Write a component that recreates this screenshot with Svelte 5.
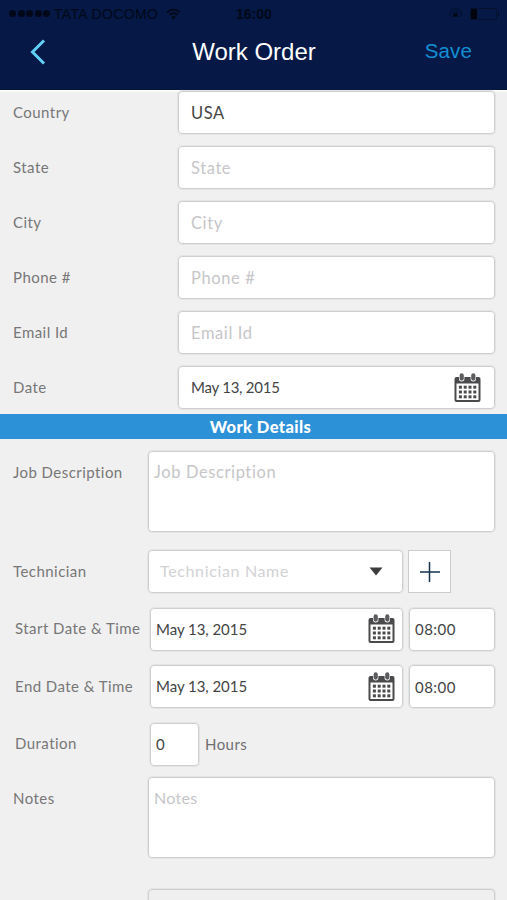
<script lang="ts">
  let contact = $state([
    { label: 'Country', value: 'USA' },
    { label: 'State', value: '' },
    { label: 'City', value: '' },
    { label: 'Phone #', value: '' },
    { label: 'Email Id', value: '' },
  ]);

  let schedule = $state([
    { label: 'Start Date & Time', date: 'May 13, 2015', time: '08:00' },
    { label: 'End Date & Time', date: 'May 13, 2015', time: '08:00' },
  ]);

  let orderDate = $state('May 13, 2015');
  let description = $state('');
  let technician = $state('');
  let duration = $state('0');
  let notes = $state('');
</script>

{#snippet calendar()}
  <svg class="calendar" width="27" height="30" viewBox="0 0 27 30" aria-hidden="true">
    <path d="M2.500 4h22a2 2 0 0 1 2 2v21a2 2 0 0 1-2 2h-22a2 2 0 0 1-2-2V6a2 2 0 0 1 2-2z" fill="#4a4a4c" />
    <rect x="2.500" y="10.500" width="22" height="16.500" fill="#fff" />
    {#each [12.7, 17.500, 22.300] as y}
      {#each [4.900, 9.700, 14.500, 19.300] as x}
        <rect {x} {y} width="3" height="3" fill="#4a4a4c" />
      {/each}
    {/each}
    {#each [7.700, 19.300] as x}
      <rect x={x - 2.700} y="0" width="5.400" height="8.500" rx="2.700" fill="#fff" />
      <rect x={x - 2.100} y="0.300" width="4.200" height="7.400" rx="2.100" fill="#5c5c5e" />
    {/each}
  </svg>
{/snippet}

<div class="screen">
  <header>
    <div class="status">
      <span class="signal">{#each Array(5) as _}<i></i>{/each}</span>
      <span class="carrier">TATA DOCOMO</span>
      <svg class="wifi" width="15" height="12" viewBox="0 0 15 12" fill="none" stroke="#020817" stroke-width="1.800">
        <path d="M1 4.300a9.300 9.300 0 0 1 13 0M3.400 6.900a5.900 5.900 0 0 1 8.200 0" />
        <path d="M5.300 9.200a3.100 3.100 0 0 1 4.400 0L7.500 11.500z" fill="#020817" stroke="none" />
      </svg>
      <span class="clock">16:00</span>
      <svg class="lock" width="13" height="13" viewBox="0 0 13 13" fill="none" stroke="#031029">
        <path d="M2 10A5.600 5.600 0 1 1 11 10M4.800 6.500V5a1.700 1.700 0 0 1 3.400 0v1.500" />
        <rect x="4.200" y="6.300" width="4.600" height="3.500" fill="#020817" stroke="none" />
      </svg>
      <svg class="battery" width="30" height="12" viewBox="0 0 30 12">
        <rect x="0.500" y="0.500" width="26" height="11" rx="1.500" fill="none" stroke="#04112f" />
        <rect x="1" y="1" width="6" height="10" fill="#01040c" />
        <path d="M28 4q2 2 0 4z" fill="#020817" />
      </svg>
    </div>
    <div class="nav">
      <button class="back" aria-label="Back">
        <svg width="16" height="26" viewBox="0 0 16 26" fill="none" stroke="#62d0f6" stroke-width="3">
          <path d="M14 1.500L2.500 13L14 24.500" />
        </svg>
      </button>
      <h1>Work Order</h1>
      <button class="save">Save</button>
    </div>
  </header>

  <main>
    <section class="contact">
      {#each contact as field}
        <label class="row">
          <span class="name">{field.label}</span>
          <input class="box" placeholder={field.label} bind:value={field.value} />
        </label>
      {/each}
      <label class="row">
        <span class="name">Date</span>
        <span class="box picker">
          <input class="date" bind:value={orderDate} />
          {@render calendar()}
        </span>
      </label>
    </section>

    <h2>Work Details</h2>

    <section class="details">
      <label class="row tall">
        <span class="name">Job Description</span>
        <textarea class="box" placeholder="Job Description" bind:value={description}></textarea>
      </label>

      <div class="row technician">
        <span class="name">Technician</span>
        <span class="box picker">
          <input placeholder="Technician Name" bind:value={technician} />
          <svg class="caret" width="14" height="9" viewBox="0 0 14 9"><path d="M0.500 0.500h13L7 8.500z" fill="#3c3c3e" /></svg>
        </span>
        <button class="add" aria-label="Add technician">
          <svg width="20" height="20" viewBox="0 0 20 20" stroke="#15324f" stroke-width="1.500"><path d="M9.500 0v20M0 10h20" /></svg>
        </button>
      </div>

      {#each schedule as slot}
        <div class="row slot">
          <span class="name">{slot.label}</span>
          <span class="box picker">
            <input class="date" bind:value={slot.date} />
            {@render calendar()}
          </span>
          <input class="box time" bind:value={slot.time} />
        </div>
      {/each}

      <label class="row slot duration">
        <span class="name">Duration</span>
        <input class="box" bind:value={duration} />
        <span class="unit">Hours</span>
      </label>

      <label class="row tall notes">
        <span class="name">Notes</span>
        <textarea class="box" placeholder="Notes" bind:value={notes}></textarea>
      </label>

      <div class="row signature">
        <div class="box"></div>
      </div>
    </section>
  </main>
</div>

<style>
:global(body) { background: #f0f0f0; }
.screen { width: 507px; height: 900px; overflow: hidden; background: #f0f0f0; color: #444; font: 15px/20px Lato, sans-serif; letter-spacing: 0.45px; }
* { box-sizing: border-box; }
button, input, textarea { font: inherit; letter-spacing: inherit; color: inherit; margin: 0; outline: none; }
button { border: 0; padding: 0; background: none; }
svg { display: block; flex: none; }

header { height: 90px; background: #051846; font-family: "Liberation Sans", Arial, sans-serif; letter-spacing: 0; }
.status { display: flex; align-items: center; height: 27px; padding: 0 7px 0 9px; color: #020817; font-size: 14px; }
.signal { display: flex; gap: 1.500px; width: 41px; }
.signal i { width: 7px; height: 7px; border-radius: 50%; background: #020817; }
.carrier { width: 105px; margin-left: 4px; white-space: nowrap; letter-spacing: 0.35px; }
.wifi { margin-left: 7px; }
.clock { margin-left: 55px; font-weight: bold; font-size: 14px; }
.lock { margin-left: auto; margin-right: 8px; }
.nav { display: grid; grid-template-columns: 1fr auto 1fr; align-items: center; height: 49px; padding: 0 35px 0 30px; }
.back { justify-self: start; }
h1 { margin: 0 -3px 0 3px; color: #fff; font-size: 24px; line-height: 30px; font-weight: normal; }
.save { justify-self: end; margin-bottom: 2px; color: #138fd3; font-size: 20.500px; letter-spacing: 0.150px; }

main { border-top: 1px solid #fff; box-shadow: inset 0 1px #fafafa; }
.name { flex: none; padding-bottom: 2px; color: #777; }
.row { display: flex; align-items: center; }
.box { height: 43px; border: 1.500px solid #cfcfcf; outline: 0.500px solid #e4e4e4; border-radius: 4px; background: #fff; min-width: 0; }
input { width: 100%; padding: 0; border: 0; background: none; }
::placeholder { color: #c6c6c8; opacity: 1; }

.contact { display: flex; flex-direction: column; gap: 12px; padding: 0 12px 0 13px; }
.contact .name { width: 165px; }
.contact .box { flex: 1; padding: 0 12px; font-size: 16.500px; letter-spacing: 0.600px; }
.picker { display: flex; align-items: center; }
.picker input { flex: 1; min-width: 0; padding-bottom: 1px; }
.contact .box.picker { padding: 0 13px 0 12px; font-size: 15px; }
.picker .date { letter-spacing: -0.250px; }

h2 { height: 25px; margin: 5px 0 12px; padding-left: 14px; background: #2d91d8; color: #fff; font-size: 16.500px; line-height: 27px; font-weight: 900; text-align: center; letter-spacing: 0.400px; }

.details { padding: 0 12px 0 13px; }
.details .name { width: 135px; }
.tall { align-items: flex-start; }
.tall .name { padding-top: 11px; }
textarea.box { display: block; flex: 1; height: 81px; padding: 10px 5px; resize: none; font-size: 16.500px; letter-spacing: 0.600px; }
.technician { margin-top: 18px; }
.technician .box { width: 255px; padding: 0 19px 0 11px; font-size: 16px; letter-spacing: 0.650px; }
.technician ::placeholder { color: #d2d2d4; }
.add { display: grid; place-items: center; width: 43px; height: 43px; margin-left: 5px; border: 1.500px solid #ccc; background: #fff; }
.details .slot { margin-top: 14.500px; }
.slot .name { width: 135px; margin-left: 2px; }
.slot .picker { width: 253px; padding: 0 7px 0 5px; }
.slot .picker .date { letter-spacing: -0.050px; }
.slot .time { width: 86px; margin-left: 6px; padding: 0 5px; }
.duration .box { width: 49px; padding: 0 5px; }
.unit { margin-left: 6px; padding-bottom: 1px; color: #6f6f71; }
.details .notes { margin-top: 11px; }
.notes textarea.box { font-size: 16px; letter-spacing: 0.300px; }
.signature { margin-top: 31px; padding-left: 135px; }
.signature .box { flex: 1; background: #efefef; }
</style>
